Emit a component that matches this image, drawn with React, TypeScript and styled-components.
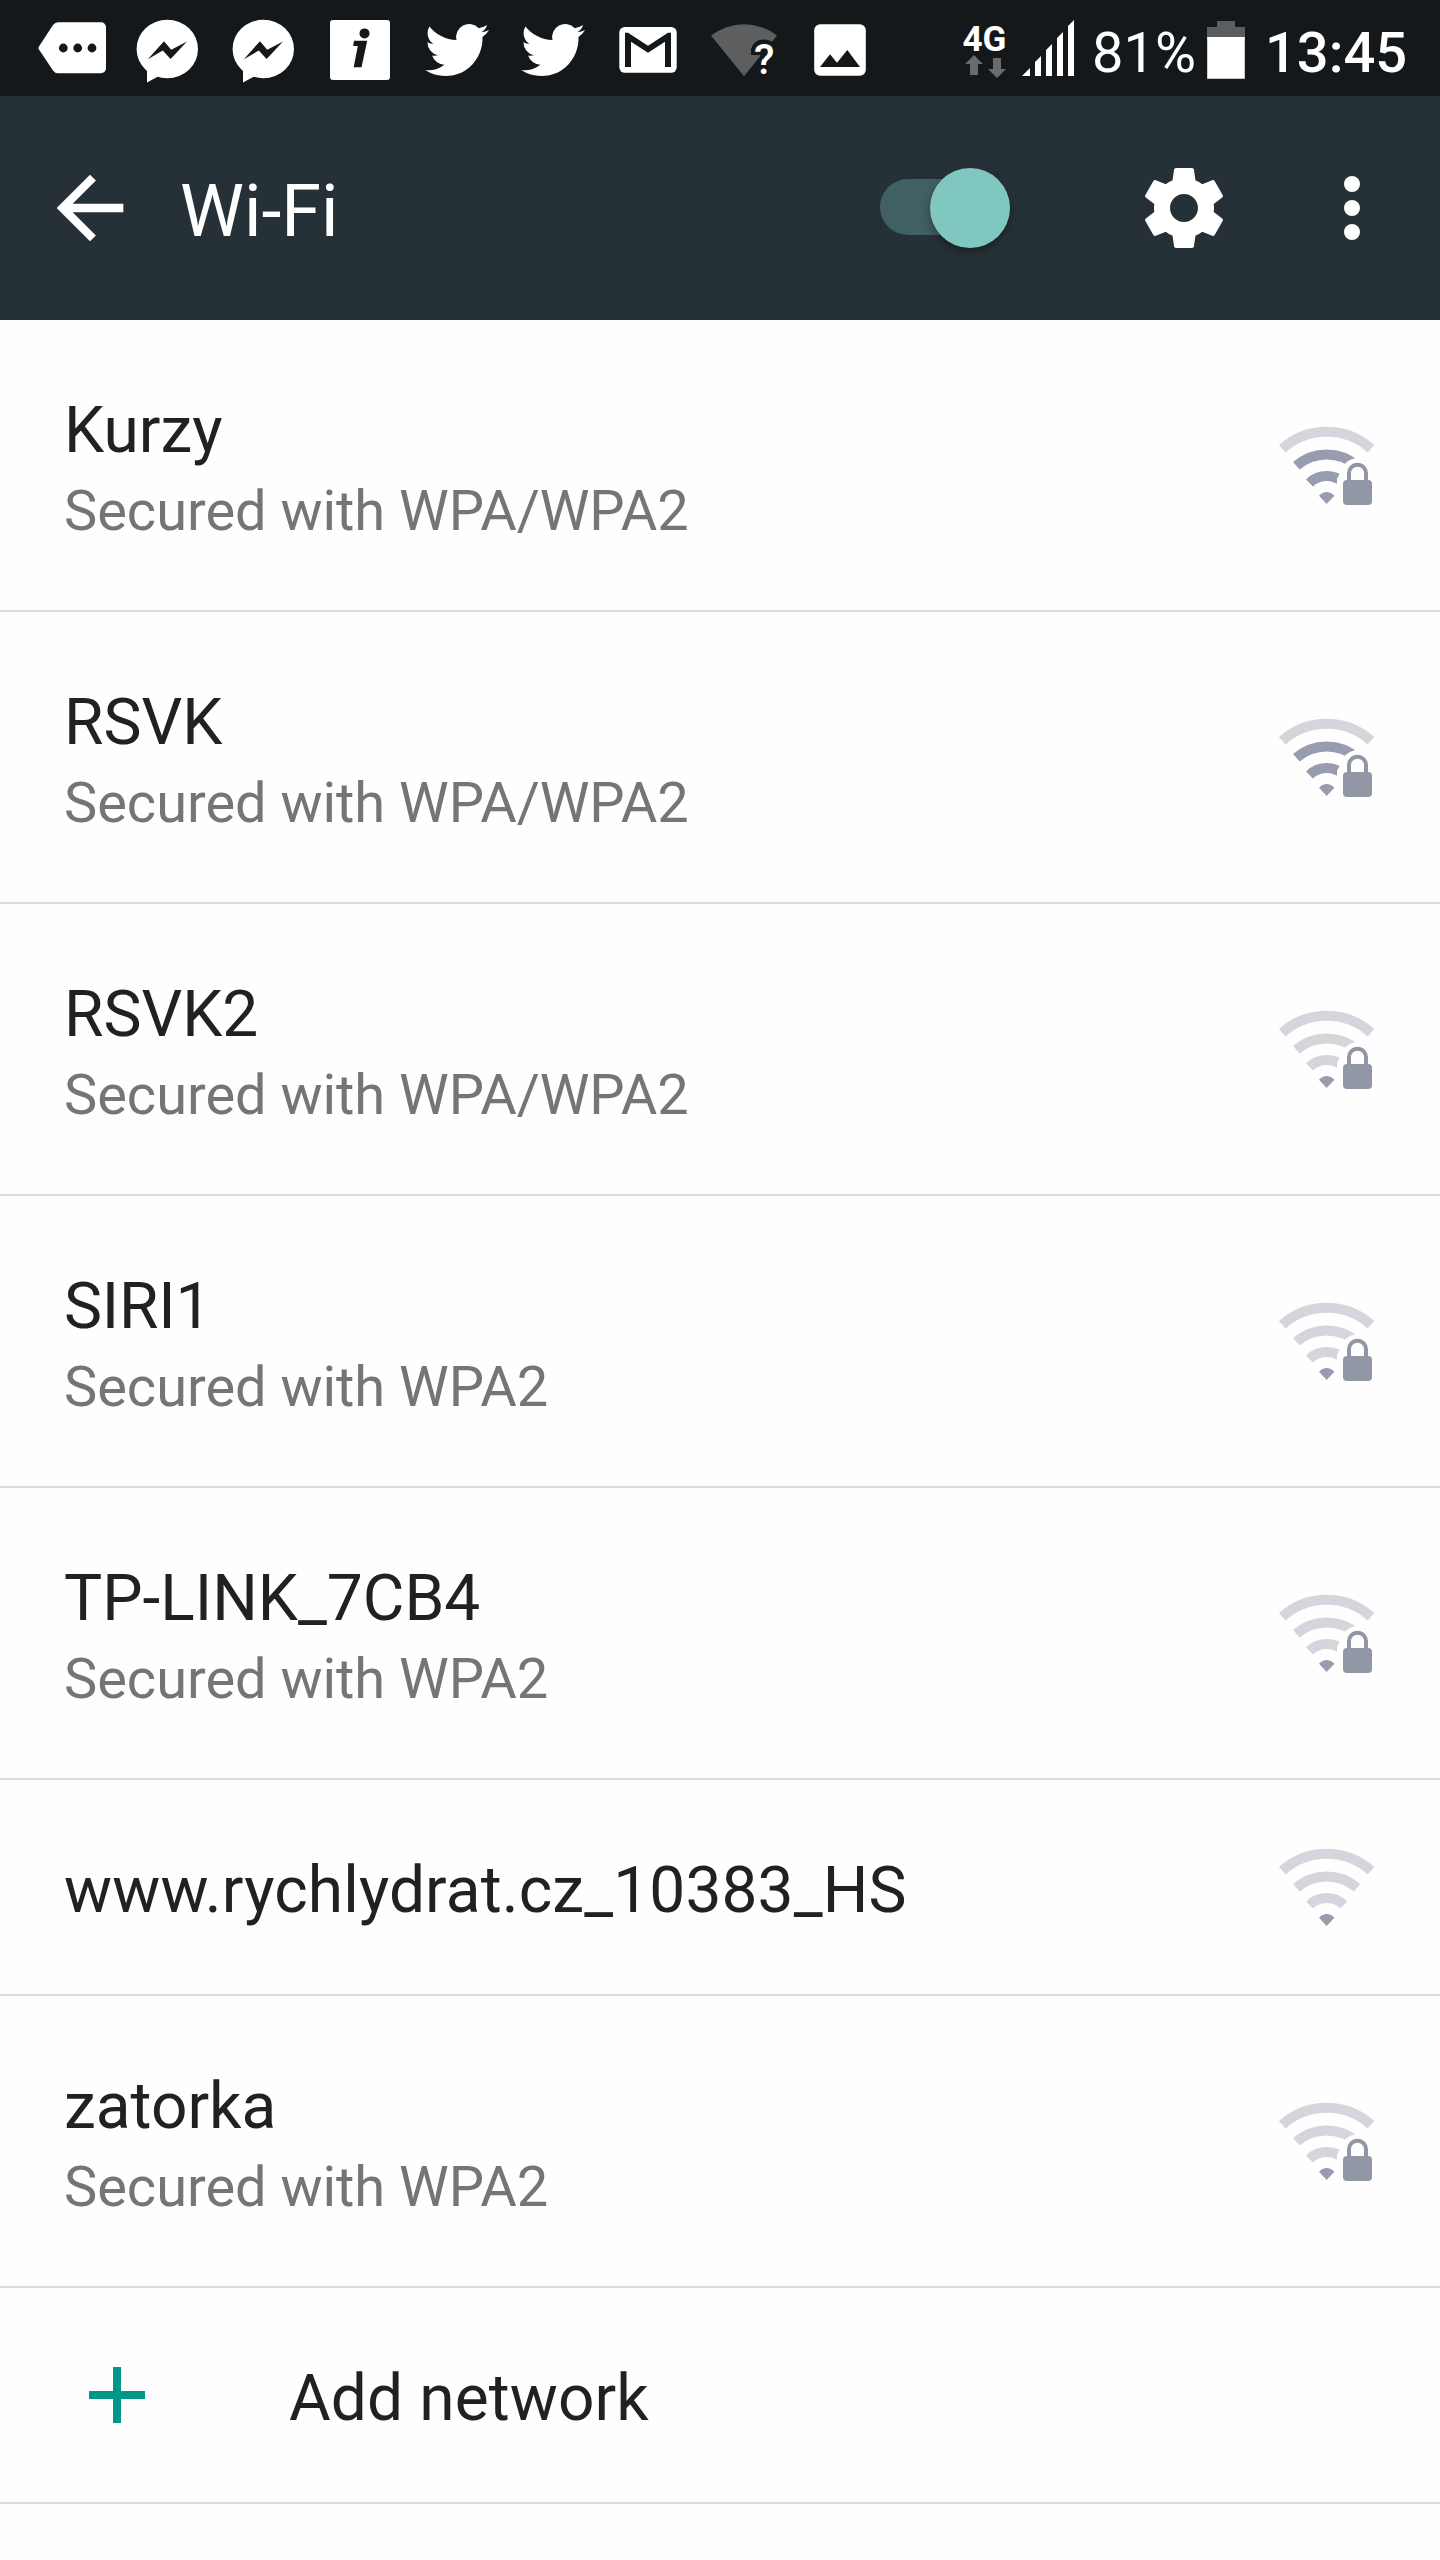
import React from "react";
import styled, { createGlobalStyle } from "styled-components";

const GlobalStyle = createGlobalStyle`
  * { box-sizing: border-box; }
  body { margin: 0; background: #fefefe; font-family: Roboto, "Noto Sans", sans-serif; }
`;

const Screen = styled.main`
  width: 1440px;
  height: 2560px;
  overflow: hidden;
  background: #fefefe;
  display: flex;
  flex-direction: column;
`;

const StatusBar = styled.header`
  height: 96px;
  flex: none;
  padding: 0 33px 0 36px;
  display: flex;
  align-items: center;
  justify-content: space-between;
  background: #14181b;
  color: #fff;
`;

const Notifications = styled.div`
  display: flex;
  gap: 24px;
`;

const SystemStatus = styled.div`
  display: flex;
  align-items: center;
`;

const Spacer = styled.span<{ $w: number }>`
  flex: none;
  width: ${(p) => p.$w}px;
`;

const Glyph = styled.svg<{ $w: number; $h?: number }>`
  display: block;
  flex: none;
  width: ${(p) => p.$w}px;
  height: ${(p) => p.$h ?? p.$w}px;
`;

const StatusText = styled.span<{ $weight: number; $width: number }>`
  width: ${(p) => p.$width}px;
  font-size: 56px;
  font-weight: ${(p) => p.$weight};
  line-height: 66px;
  padding-top: 9px;
  white-space: nowrap;
`;

const Toolbar = styled.nav`
  height: 224px;
  flex: none;
  padding: 0 40px;
  display: flex;
  align-items: center;
  background: #263137;
  color: #fff;
`;

const ToolbarTitle = styled.h1`
  flex: 1;
  margin: 0 0 0 40px;
  padding-top: 7px;
  font-size: 72px;
  font-weight: 400;
  line-height: 84px;
`;

const Switch = styled.button`
  width: 130px;
  height: 56px;
  margin: 0 126px 2px 0;
  padding: 0;
  border: 0;
  border-radius: 28px;
  background: #416063;
  display: flex;
  align-items: center;
  justify-content: flex-end;
`;

const Thumb = styled.span`
  flex: none;
  width: 80px;
  height: 80px;
  margin-top: 2px;
  border-radius: 50%;
  background: #80c7c0;
  box-shadow: 0 4px 9px rgba(0, 0, 0, 0.36);
`;

const IconButton = styled.button<{ $gap?: number }>`
  margin: 0 ${(p) => p.$gap ?? 0}px 0 0;
  padding: 0;
  border: 0;
  background: none;
  color: inherit;
`;

const List = styled.ul`
  margin: 0;
  padding: 0;
  list-style: none;
`;

const Row = styled.li<{ $compact?: boolean }>`
  height: ${(p) => (p.$compact ? 216 : 292)}px;
  padding: 0 64px;
  border-bottom: 2px solid #dddddd;
  display: flex;
  align-items: center;
`;

const RowText = styled.div`
  flex: 1;
  padding-top: 7px;
  display: flex;
  flex-direction: column;
  gap: 9px;
`;

const Name = styled.span<{ $tracking?: number }>`
  font-size: 64px;
  line-height: 76px;
  letter-spacing: ${(p) => p.$tracking ?? 0}px;
  color: #212121;
`;

const Security = styled.span`
  font-size: 56px;
  line-height: 66px;
  letter-spacing: -0.04px;
  color: #757575;
`;

const AddIcon = styled(Glyph)`
  margin: 0 144px 0 25px;
`;

const MoreTag = () => (
  <Glyph $w={72} $h={96} viewBox="0 0 72 96">
    <path fill="#fff" d="M22 22.3H65a5 5 0 0 1 5 5V68.3a5 5 0 0 1-5 5H22Q19 73.3 17 70.5L2.8 49.3Q2 48 2.8 46.7L17 25Q19 22.3 22 22.3Z" />
    <circle cx="27.3" cy="48" r="4.4" fill="#14181b" />
    <circle cx="41.7" cy="48" r="4.4" fill="#14181b" />
    <circle cx="56" cy="48" r="4.4" fill="#14181b" />
  </Glyph>
);

const Messenger = () => (
  <Glyph $w={72} $h={96} viewBox="0 0 72 96">
    <ellipse cx="35.3" cy="49" rx="30.7" ry="29.2" fill="#fff" />
    <path fill="#fff" d="M15 68V82.5L27.5 75.8Z" />
    <path fill="#14181b" d="M15.8 59.2 32 41.2 39.2 49.8 55 41.5 38.6 58.9 30.8 50.6Z" />
  </Glyph>
);

const Info = () => (
  <Glyph $w={72} $h={96} viewBox="0 0 72 96">
    <rect x="6" y="20" width="60" height="60" rx="3" fill="#fff" />
    <circle cx="40.5" cy="33.4" r="5" fill="#14181b" />
    <path fill="#14181b" d="M30 40.7H43.2L37.5 67.3H29.7L33.8 46H29.2Z" />
  </Glyph>
);

const Bird = () => (
  <Glyph $w={72} $h={96} viewBox="0 0 72 96">
    <path
      fill="#fff"
      transform="translate(5 18) scale(2.667)"
      d="M23.953 4.57a10 10 0 01-2.825.775 4.958 4.958 0 002.163-2.723c-.951.555-2.005.959-3.127 1.184a4.92 4.92 0 00-8.384 4.482C7.69 8.095 4.067 6.13 1.64 3.162a4.822 4.822 0 00-.666 2.475c0 1.71.87 3.213 2.188 4.096a4.904 4.904 0 01-2.228-.616v.06a4.923 4.923 0 003.946 4.827 4.996 4.996 0 01-2.212.085 4.936 4.936 0 004.604 3.417 9.867 9.867 0 01-6.102 2.105c-.39 0-.779-.023-1.17-.067a13.995 13.995 0 007.557 2.209c9.053 0 13.998-7.496 13.998-13.985 0-.21 0-.42-.015-.63A9.935 9.935 0 0024 4.59z"
    />
  </Glyph>
);

const Mail = () => (
  <Glyph $w={72} $h={96} viewBox="0 0 72 96">
    <rect x="7.3" y="27" width="57.4" height="45.8" rx="5.5" fill="#fff" />
    <path fill="#14181b" d="M13 32.7H16L36 45.7 56 32.7H59V67H53V41.7L36 52.7 19 41.7V67H13Z" />
  </Glyph>
);

const WifiUnknown = () => (
  <Glyph $w={72} $h={96} viewBox="0 0 72 96">
    <path fill="#5d5e60" d="M36 76.2 3 35.6A53.5 53.5 0 0 1 69 35.6Z" />
    <path fill="#14181b" d="M43 55V49Q46 39.5 55.5 39.5 62 39.5 66 43L72 48V76H46.5L52.5 55Z" />
    <text x="46" y="74" fill="#fff" fontFamily="Roboto, sans-serif" fontSize="42" fontWeight="500">?</text>
  </Glyph>
);

const Picture = () => (
  <Glyph $w={72} $h={96} viewBox="0 0 72 96">
    <rect x="10.2" y="24.2" width="51.6" height="51.6" rx="6" fill="#fff" />
    <path fill="#14181b" d="M16 67 26 54.3 33 62.7 43.3 50 56 67Z" />
  </Glyph>
);

const MobileData = () => (
  <Glyph $w={46} $h={96} viewBox="0 0 46 96">
    <text x="0.5" y="51" fill="#fff" fontFamily="Roboto, sans-serif" fontSize="35" fontWeight="700" textLength="44" lengthAdjust="spacingAndGlyphs">4G</text>
    <path fill="#6a6b6d" d="M12 55 21 64H16V75H8V64H3Z" />
    <path fill="#6a6b6d" d="M31 58H39V69H44L35 78 26 69H31Z" />
  </Glyph>
);

const Signal = () => (
  <Glyph $w={54} $h={96} viewBox="0 0 54 96">
    <path fill="#fff" d="M0 76 8 68V76ZM13 76V62L19 56V76ZM24 76V50L30 44V76ZM35 76V38L41 32V76ZM46 76V26L52 20V76Z" />
  </Glyph>
);

const Battery = () => (
  <Glyph $w={38} $h={96} viewBox="0 0 38 96">
    <path fill="#5c5d60" d="M0 27H10V21H28V27H38V40H0Z" />
    <path fill="#fff" d="M.2 37H37.8V78.8H.2Z" />
  </Glyph>
);

const STRONG = "#979cae";
const FAINT = "#d5d6dc";

/* Arcs are lit from the inside out as the level grows. */
const WifiSignal = ({ level, locked }: { level: number; locked: boolean }) => (
  <Glyph $w={100} viewBox="48 45 300 300">
    <g fill="none" strokeWidth="30">
      <path stroke={level > 2 ? STRONG : FAINT} d="M67 146A199 199 0 0 1 333 146" />
      <path stroke={level > 1 ? STRONG : FAINT} d="M109 197.5A138 138 0 0 1 291 197.5" />
      <path stroke={level > 0 ? STRONG : FAINT} d="M148.5 249A74.5 74.5 0 0 1 251.5 249" />
    </g>
    <path fill={STRONG} d="M177 287Q187 276 200 276T223 287L200 312Z" />
    {locked && (
      <>
        <path fill="#fefefe" d="M231 260V236Q237 226 240 220A58 58 0 0 1 348 204V260Z" />
        <path fill="none" stroke="#9197a5" strokeWidth="12" d="M267 244V220A25.5 26 0 0 1 318 220V244" />
        <rect x="249" y="240" width="87" height="75" rx="12" fill="#9197a5" />
      </>
    )}
  </Glyph>
);

type Network = { name: string; security?: string; level: number; tracking?: number };

const networks: Network[] = [
  { name: "Kurzy", security: "Secured with WPA/WPA2", level: 2 },
  { name: "RSVK", security: "Secured with WPA/WPA2", level: 2 },
  { name: "RSVK2", security: "Secured with WPA/WPA2", level: 0 },
  { name: "SIRI1", security: "Secured with WPA2", level: 0, tracking: -0.2 },
  { name: "TP-LINK_7CB4", security: "Secured with WPA2", level: 0 },
  { name: "www.rychlydrat.cz_10383_HS", level: 0, tracking: 0.13 },
  { name: "zatorka", security: "Secured with WPA2", level: 0 },
];

export default function App() {
  return (
    <Screen>
      <GlobalStyle />
      <StatusBar>
        <Notifications>
          <MoreTag />
          <Messenger />
          <Messenger />
          <Info />
          <Bird />
          <Bird />
          <Mail />
          <WifiUnknown />
          <Picture />
        </Notifications>
        <SystemStatus>
          <MobileData />
          <Spacer $w={14} />
          <Signal />
          <Spacer $w={16} />
          <StatusText $weight={400} $width={115}>81%</StatusText>
          <Battery />
          <Spacer $w={20} />
          <StatusText $weight={500} $width={142}>13:45</StatusText>
        </SystemStatus>
      </StatusBar>
      <Toolbar>
        <IconButton aria-label="Back">
          <Glyph $w={100} viewBox="0 0 24 24">
            <path fill="currentColor" d="M20 11H7.83l5.59-5.59L12 4l-8 8 8 8 1.41-1.41L7.83 13H20v-2z" />
          </Glyph>
        </IconButton>
        <ToolbarTitle>Wi-Fi</ToolbarTitle>
        <Switch role="switch" aria-checked>
          <Thumb />
        </Switch>
        <IconButton aria-label="Settings" $gap={72}>
          <Glyph $w={96} viewBox="0 0 24 24">
            <path
              fill="currentColor"
              d="M19.43 12.98c.04-.32.07-.64.07-.98s-.03-.66-.07-.98l2.11-1.65c.19-.15.24-.42.12-.64l-2-3.46c-.12-.22-.39-.3-.61-.22l-2.49 1c-.52-.4-1.08-.73-1.69-.98l-.38-2.65C14.46 2.18 14.25 2 14 2h-4c-.25 0-.46.18-.49.42l-.38 2.65c-.61.25-1.17.59-1.69.98l-2.49-1c-.23-.09-.49 0-.61.22l-2 3.46c-.13.22-.07.49.12.64l2.11 1.65c-.04.32-.07.65-.07.98s.03.66.07.98l-2.11 1.65c-.19.15-.24.42-.12.64l2 3.46c.12.22.39.3.61.22l2.49-1c.52.4 1.08.73 1.69.98l.38 2.65c.03.24.24.42.49.42h4c.25 0 .46-.18.49-.42l.38-2.65c.61-.25 1.17-.59 1.69-.98l2.49 1c.23.09.49 0 .61-.22l2-3.46c.12-.22.07-.49-.12-.64l-2.11-1.65zM12 15.5c-1.93 0-3.5-1.57-3.5-3.5s1.57-3.5 3.5-3.5 3.5 1.57 3.5 3.5-1.57 3.5-3.5 3.5z"
            />
          </Glyph>
        </IconButton>
        <IconButton aria-label="More options">
          <Glyph $w={96} viewBox="0 0 24 24">
            <circle cx="12" cy="6" r="2" fill="currentColor" />
            <circle cx="12" cy="12" r="2" fill="currentColor" />
            <circle cx="12" cy="18" r="2" fill="currentColor" />
          </Glyph>
        </IconButton>
      </Toolbar>
      <List>
        {networks.map((n) => (
          <Row key={n.name} $compact={!n.security}>
            <RowText>
              <Name $tracking={n.tracking}>{n.name}</Name>
              {n.security && <Security>{n.security}</Security>}
            </RowText>
            <WifiSignal level={n.level} locked={!!n.security} />
          </Row>
        ))}
        <Row $compact>
          <AddIcon $w={56} viewBox="0 0 14 14">
            <path fill="#009688" d="M6 0H8V6H14V8H8V14H6V8H0V6H6Z" />
          </AddIcon>
          <RowText>
            <Name $tracking={0.1}>Add network</Name>
          </RowText>
        </Row>
      </List>
    </Screen>
  );
}
